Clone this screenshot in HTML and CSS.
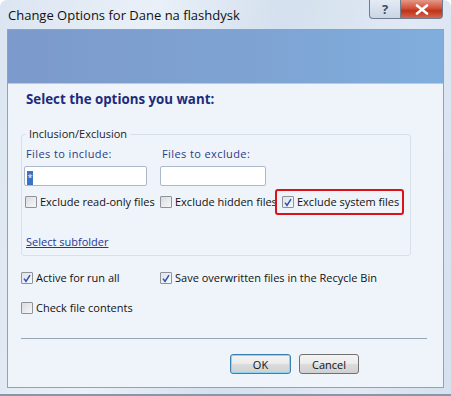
FILE: index.html
```html
<!DOCTYPE html>
<html lang="en">

<head>
    <meta charset="UTF-8">
    <title>Change Options</title>
    <link rel="stylesheet" href="styles.css">
</head>

<body>
    <div class="window">
        <div class="titlebar">
            <span class="title">Change Options for Dane na flashdysk</span>
            <div class="caption">
                <div class="cap help">?</div>
                <div class="cap close">
                    <svg width="14" height="11" viewBox="0 0 14 11">
                        <path d="M2 1.5 L12 9.5 M12 1.5 L2 9.5" stroke="#fff" stroke-width="2.6" stroke-linecap="round" />
                    </svg>
                </div>
            </div>
        </div>
        <div class="client">
            <div class="banner"></div>
            <div class="content">
                <h1 class="heading">Select the options you want:</h1>

                <fieldset class="group">
                    <legend>Inclusion/Exclusion</legend>
                    <div class="fields">
                        <div class="field first">
                            <div class="field-label">Files to include:</div>
                            <div class="input include"><span class="sel">*</span></div>
                        </div>
                        <div class="field">
                            <div class="field-label">Files to exclude:</div>
                            <div class="input exclude"></div>
                        </div>
                    </div>
                    <div class="checks">
                        <div class="check first"><span class="box"></span>Exclude read-only files</div>
                        <div class="check"><span class="box"></span>Exclude hidden files</div>
                        <div class="check marked">
                            <span class="box checked">
                                <svg width="11" height="11" viewBox="0 0 11 11">
                                    <path d="M2.2 5.6 L4.4 8.6 L8.8 1.8" fill="none" stroke="#2b56b8" stroke-width="1.7" />
                                </svg>
                            </span>Exclude system files
                        </div>
                    </div>
                    <a class="link">Select subfolder</a>
                </fieldset>

                <div class="options">
                    <div class="check first">
                        <span class="box checked">
                            <svg width="11" height="11" viewBox="0 0 11 11">
                                <path d="M2.2 5.6 L4.4 8.6 L8.8 1.8" fill="none" stroke="#2b56b8" stroke-width="1.7" />
                            </svg>
                        </span>Active for run all
                    </div>
                    <div class="check">
                        <span class="box checked">
                            <svg width="11" height="11" viewBox="0 0 11 11">
                                <path d="M2.2 5.6 L4.4 8.6 L8.8 1.8" fill="none" stroke="#2b56b8" stroke-width="1.7" />
                            </svg>
                        </span>Save overwritten files in the Recycle Bin
                    </div>
                    <div class="check first"><span class="box"></span>Check file contents</div>
                </div>

                <div class="separator"></div>

                <div class="buttons">
                    <button class="btn default">OK</button>
                    <button class="btn">Cancel</button>
                </div>
            </div>
        </div>
    </div>
</body>

</html>
```

FILE: styles.css
```css
* {
    margin: 0;
    padding: 0;
    box-sizing: border-box;
}

body {
    background-color: #ffffff;
    font-family: "Open Sans", "Noto Sans", sans-serif;
    font-size: 11px;
    color: #111;
}

.window {
    width: 451px;
    height: 396px;
    border-radius: 7px 7px 0 0;
    background: linear-gradient(100deg, #dbe5f1 0%, #e9f0f8 30%, #d4e0ee 55%, #e1e9f4 80%, #d5e1ef 100%);
    border-bottom: 2px solid #8a96a6;
    overflow: hidden;
}

.titlebar {
    height: 29px;
    display: flex;
    justify-content: space-between;
    align-items: flex-start;
    padding: 0 8px 0 8px;
}

.title {
    font-size: 13px;
    line-height: 29px;
    color: #101010;
    padding-top: 1px;
}

.caption {
    display: flex;
}

.cap {
    height: 19px;
    border: 1px solid #6f7d90;
    border-top: 0;
    display: flex;
    justify-content: center;
    align-items: center;
}

.help {
    width: 31px;
    border-radius: 0 0 0 4px;
    border-right: 0;
    background: linear-gradient(to bottom, #e4ebf4, #c9d6e6);
    color: #3d4f69;
    font-size: 13px;
    font-weight: bold;
}

.close {
    width: 43px;
    border-radius: 0 0 4px 0;
    background: linear-gradient(to bottom, #e59886 0%, #d1533d 45%, #c03218 60%, #d4684e 100%);
}

.client {
    margin: 0 7px;
    height: 359px;
    border: 1px solid #8ea2bc;
    background-color: #eff4fa;
    display: flex;
    flex-direction: column;
}

.banner {
    height: 54px;
    background: linear-gradient(to right, #7c9acb, #7ea4d4 60%, #80aedc);
    border-bottom: 1px solid #b9cbe0;
}

.content {
    padding: 0 15px 0 13px;
}

.heading {
    font-size: 13.3px;
    font-weight: bold;
    color: #1c2b7c;
    line-height: 20px;
    margin-top: 5px;
    padding-left: 5px;
}

.group {
    margin-top: 18px;
    width: 390px;
    border: 1px solid #d6e0e8;
    border-radius: 3px;
    padding: 6px 0 6px 2px;
}

.group legend {
    margin-left: 2px;
    padding: 0 3px;
    line-height: 14px;
    color: #222;
}

.fields {
    display: flex;
}

.field {
    width: 136px;
}

.field-label {
    line-height: 14px;
    color: #273c8c;
    padding-left: 2px;
    letter-spacing: 0.4px;
}

.input {
    margin-top: 5px;
    height: 20px;
    background-color: #fff;
    border: 1px solid #abb8c9;
    border-radius: 2px;
    padding: 2px 2px;
}

.include {
    width: 123px;
}

.exclude {
    width: 106px;
}

.sel {
    display: inline-block;
    background-color: #3a73c5;
    color: #fff;
    font-size: 9px;
    line-height: 14px;
    width: 6px;
    text-align: center;
}

.checks {
    display: flex;
    align-items: center;
    margin-top: 3px;
}

.check {
    display: flex;
    align-items: center;
    line-height: 16px;
    width: 136px;
    white-space: nowrap;
}

.checks .check.first {
    padding-left: 1px;
}

.box {
    width: 12px;
    height: 12px;
    border: 1px solid #8f9399;
    border-radius: 1px;
    background: linear-gradient(135deg, #d9dcdf, #f6f7f8);
    margin-right: 3px;
    display: flex;
    justify-content: center;
    align-items: center;
}

.box.checked {
    background: linear-gradient(135deg, #dfe3e8, #f8f9fa);
}

.check.marked {
    width: auto;
    border: 2px solid #d9131b;
    border-radius: 3px;
    padding: 3px 3px 3px 5px;
    margin-left: -21px;
}

.link {
    display: inline-block;
    margin-top: 20px;
    margin-left: 2px;
    line-height: 14px;
    color: #1d3896;
    text-decoration: underline;
}

.options {
    margin-top: 14px;
    display: grid;
    grid-template-columns: 139px auto;
    row-gap: 14px;
}

.separator {
    margin-top: 22px;
    height: 1px;
    width: 406px;
    background-color: #9aa6b8;
}

.buttons {
    display: flex;
    justify-content: flex-end;
    gap: 8px;
    margin-top: 15px;
    padding-right: 69px;
}

.btn {
    width: 60px;
    height: 20px;
    border: 1px solid #707070;
    border-radius: 3px;
    background: linear-gradient(to bottom, #f4f4f4 0%, #ebebeb 50%, #dcdcdc 51%, #d0d0d0 100%);
    font-family: "Open Sans", "Noto Sans", sans-serif;
    font-size: 11px;
    color: #111;
}

.btn.default {
    width: 61px;
    border-color: #3c7fb1;
    box-shadow: inset 0 0 0 1px #8fd3f1;
}
```
